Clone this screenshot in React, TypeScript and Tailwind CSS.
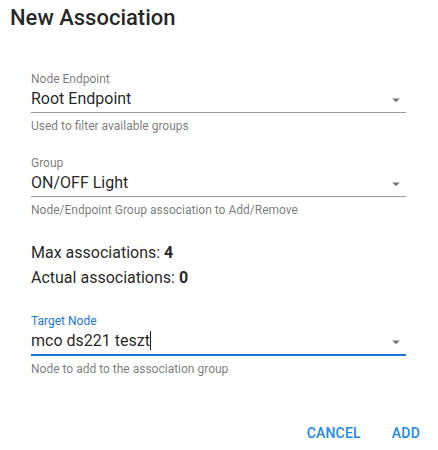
import React from 'react';

type FieldProps = {
  label: string;
  value: string;
  helper: string;
  focused?: boolean;
};

const DropArrow = () => (
  <svg
    viewBox="0 0 24 24"
    className="absolute right-[1px] top-[20px] w-[18px] h-[18px] fill-[#757575]"
  >
    <path d="M7 10l5 5 5-5z" />
  </svg>
);

const SelectField: React.FC<FieldProps> = ({ label, value, helper, focused }) => (
  <div className="relative w-[375px]">
    <label
      className={`block text-xs leading-4 ${focused ? 'text-[#1976d2]' : 'text-black/55'}`}
    >
      {label}
    </label>
    <div
      className={`mt-[2px] pb-[4px] text-base leading-[19px] text-black/87 ${
        focused ? 'border-b-2 border-[#1976d2]' : 'border-b border-black/40'
      }`}
    >
      {value}
      {focused && <span className="inline-block w-px h-[19px] align-top bg-black/87" />}
    </div>
    <DropArrow />
    <p className="mt-[5px] text-xs leading-4 text-black/55">{helper}</p>
  </div>
);

export default function App() {
  return (
    <div className="w-[438px] h-[450px] bg-white font-['Roboto',sans-serif] text-black/87 flex flex-col">
      <h2 className="mt-[4px] px-[10px] text-[22px] leading-[28px] font-medium">New Association</h2>

      <div className="mt-[39px] pl-[31px] flex flex-col">
        <SelectField
          label="Node Endpoint"
          value="Root Endpoint"
          helper="Used to filter available groups"
        />
        <div className="mt-[21px]">
          <SelectField
            label="Group"
            value="ON/OFF Light"
            helper="Node/Endpoint Group association to Add/Remove"
          />
        </div>

        <div className="mt-[22px] flex flex-col text-base leading-[25px]">
          <p>
            Max associations: <span className="font-bold">4</span>
          </p>
          <p>
            Actual associations: <span className="font-bold">0</span>
          </p>
        </div>

        <div className="mt-[23px]">
          <SelectField
            label="Target Node"
            value="mco ds221 teszt"
            helper="Node to add to the association group"
            focused
          />
        </div>
      </div>

      <div className="mt-auto mb-[3px] flex justify-end items-center gap-[31px] pr-[18px] text-sm font-medium tracking-[0.2px] text-[#1e88e5]">
        <button className="h-[28px]">CANCEL</button>
        <button className="h-[28px]">ADD</button>
      </div>
    </div>
  );
}
